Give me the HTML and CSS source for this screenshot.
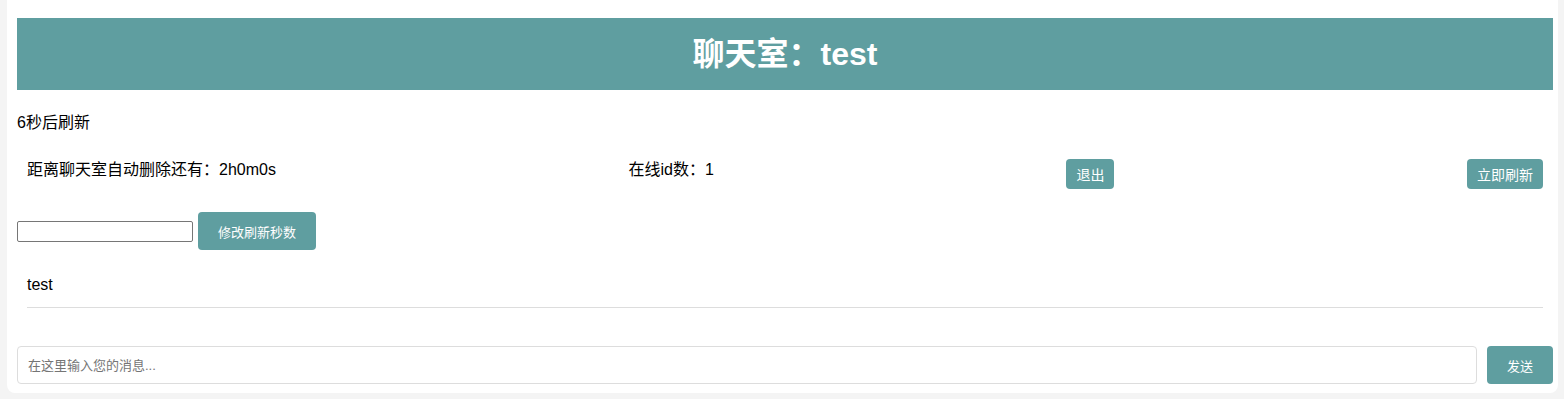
FILE: index.html
```html
<!DOCTYPE html>
<html lang="zh">
<head>
<meta charset="utf-8">
<title>聊天室：test</title>
<link rel="stylesheet" href="styles.css">
</head>
<body>
<div class="container">
  <header class="header">聊天室：test</header>
  <div class="refresh-note">6秒后刷新</div>
  <div class="info-row">
    <span class="info-text">距离聊天室自动删除还有：2h0m0s</span>
    <span class="info-text">在线id数：1</span>
    <button class="btn btn-small">退出</button>
    <button class="btn btn-small">立即刷新</button>
  </div>
  <div class="interval-row">
    <input class="interval-input" type="text">
    <button class="btn btn-medium">修改刷新秒数</button>
  </div>
  <div class="messages">
    <div class="message">test</div>
  </div>
  <div class="send-row">
    <input class="msg-input" type="text" placeholder="在这里输入您的消息...">
    <button class="btn btn-medium">发送</button>
  </div>
</div>
</body>
</html>
```
FILE: styles.css
```css
html, body {
  margin: 0;
  padding: 0;
  background: #f4f4f4;
  font-family: "Liberation Sans", Arial, "Noto Sans CJK SC", sans-serif;
  color: #000;
}
.container {
  margin: 0 6px 0 7px;
  padding: 18px 5px 9px 10px;
  background: #fff;
  border-radius: 0 0 8px 8px;
}
.header {
  background: #5f9ea0;
  color: #fff;
  text-align: center;
  font-size: 32px;
  font-weight: bold;
  height: 72px;
  line-height: 72px;
}
.refresh-note {
  margin-top: 23px;
  font-size: 16px;
  line-height: 20px;
}
.info-row {
  margin-top: 16px;
  padding: 10px;
  display: flex;
  justify-content: space-between;
  align-items: flex-start;
}
.info-text {
  font-size: 16px;
  line-height: 22px;
}
.btn {
  background: #5f9ea0;
  color: #fff;
  border: none;
  border-radius: 4px;
  font-family: "Liberation Sans", Arial, "Noto Sans CJK SC", sans-serif;
  cursor: pointer;
}
.btn-small {
  font-size: 14px;
  height: 30px;
  padding: 0 10px;
}
.btn-medium {
  font-size: 13px;
  height: 38px;
  padding: 0 20px;
}
.interval-row {
  margin-top: 13px;
  display: flex;
  align-items: center;
  gap: 5px;
}
.interval-input {
  width: 176px;
  height: 21px;
  box-sizing: border-box;
  border: 1px solid #767676;
  border-radius: 2px;
  padding: 1px 2px;
  margin: 0;
}
.messages {
  margin-top: 13px;
  padding: 0 10px;
}
.message {
  padding: 10px 0;
  font-size: 16px;
  line-height: 24px;
  border-bottom: 1px solid #ddd;
}
.send-row {
  margin-top: 38px;
  display: flex;
  gap: 10px;
}
.msg-input {
  flex: 1;
  height: 38px;
  box-sizing: border-box;
  border: 1px solid #ddd;
  border-radius: 4px;
  padding: 0 10px;
  font-size: 13px;
  font-family: "Liberation Sans", Arial, "Noto Sans CJK SC", sans-serif;
  margin: 0;
}
.msg-input::placeholder {
  color: #757575;
}
```
